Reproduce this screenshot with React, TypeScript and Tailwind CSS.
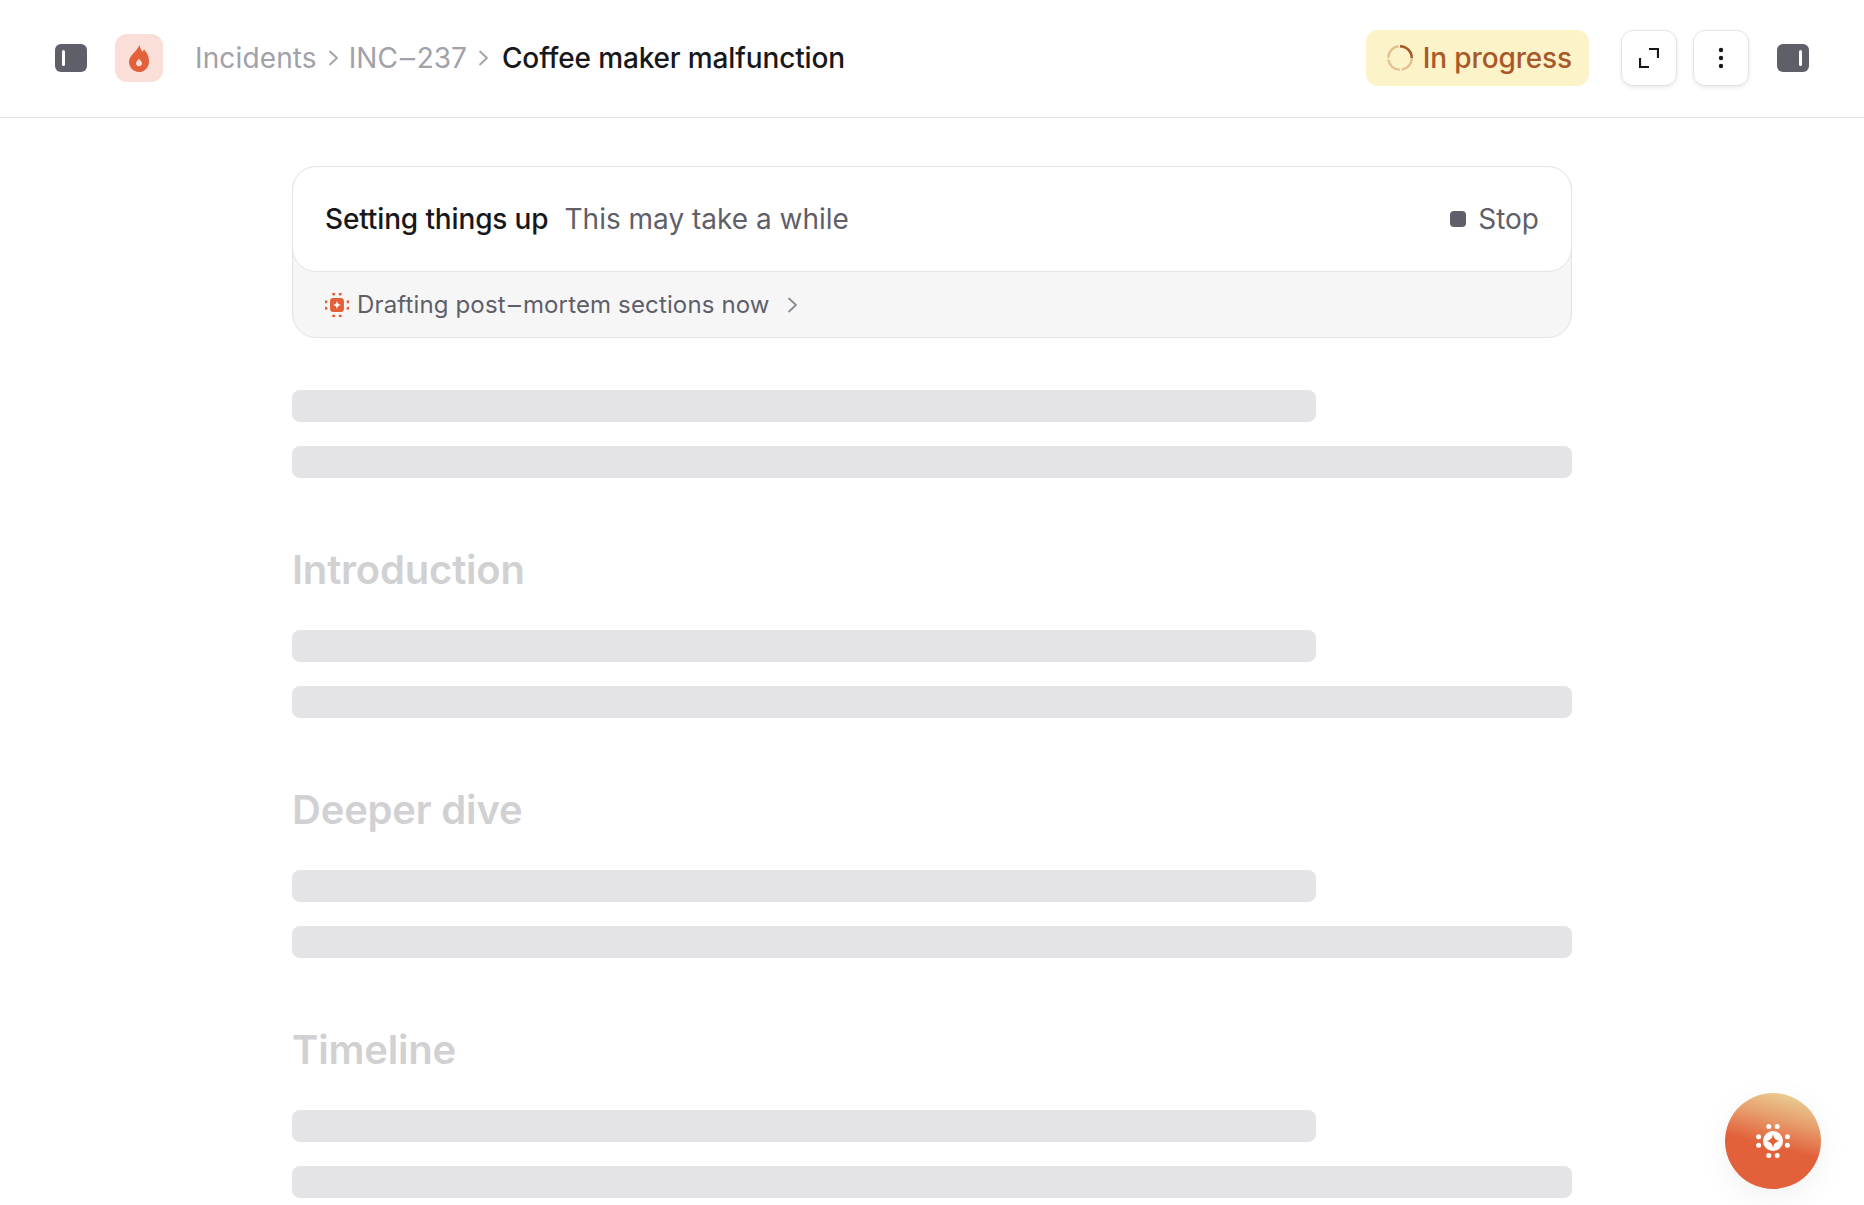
import React from 'react';

const PanelIcon = ({ side }: { side: 'left' | 'right' }) => (
  <svg width="32" height="28" viewBox="0 0 32 28" className="shrink-0">
    <rect width="32" height="28" rx="6" fill="#5f5f69" />
    <rect x={side === 'left' ? 7 : 22} y="6" width="3" height="16" rx="1.5" fill="#fff" />
  </svg>
);

const Flame = () => (
  <svg width="20" height="27" viewBox="0 0 20 27">
    <path
      fillRule="evenodd"
      fill="#e2603a"
      d="M10.500 0c.6 3.400 1.900 5 3 6.800.4-.9.900-1.600 1.600-2.400C17.800 7.400 20 11 20 16.400 20 22.400 15.600 27 10 27S0 22.400 0 16.600C0 10.500 7.500 7.300 10.500 0ZM10 13.800c-.8 1.500-3 2.500-3 4.500 0 1.700 1.400 3 3 3s3-1.300 3-3c0-2-2.200-3-3-4.500Z"
    />
  </svg>
);

const dots = [
  [-3.5, -12], [3.5, -12], [-3.5, 12], [3.5, 12],
  [-12, -3.5], [-12, 3.5], [12, -3.5], [12, 3.5],
];

// small orange spark used in the status strip
const SparkSmall = () => (
  <svg width="24" height="24" viewBox="-13 -13 26 26" className="shrink-0">
    {dots.map(([x, y], i) => (
      <circle key={i} cx={x} cy={y} r="1.7" fill="#e2603a" />
    ))}
    <rect x="-7.500" y="-7.500" width="15" height="15" rx="3.500" fill="#e2603a" />
    <path d="M0-4.500C.5-1.500 1.500-.5 4.500 0 1.500.5.5 1.500 0 4.500-.5 1.500-1.500.5-4.500 0-1.500-.5-.5-1.500 0-4.500Z" fill="#fff" />
  </svg>
);

const SparkLarge = () => (
  <svg width="36" height="36" viewBox="-18 -18 36 36">
    {dots.map(([x, y], i) => (
      <circle key={i} cx={x * 1.2} cy={y * 1.2} r="2.500" fill="#fff" />
    ))}
    <circle r="10" fill="#fff" />
    <path d="M0-7C.8-2.500 2.500-.8 7 0 2.500.8.8 2.500 0 7-.8 2.500-2.500.8-7 0-2.500-.8-.8-2.500 0-7Z" fill="#e2603a" />
  </svg>
);

const Spinner = () => (
  <svg width="26" height="26" viewBox="0 0 26 26" fill="none" className="shrink-0">
    <g transform="rotate(-90 13 13)">
      <circle cx="13" cy="13" r="11.800" stroke="#e4c08f" strokeWidth="2.400" strokeDasharray="16.500 2.030" />
    </g>
    <path d="M13 1.200A11.800 11.800 0 0 1 24.800 13" stroke="#a8592a" strokeWidth="2.400" />
  </svg>
);

const Chevron = ({ color = '#a1a1aa' }: { color?: string }) => (
  <svg width="20" height="20" viewBox="0 0 20 20" fill="none" className="shrink-0">
    <path d="M7 3.500 14 10l-7 6.500" stroke={color} strokeWidth="1.800" strokeLinecap="round" strokeLinejoin="round" />
  </svg>
);

const Hyphen = () => <span className="inline-block scale-x-[1.7] px-[3px]">-</span>;

const Bars = () => (
  <div className="flex flex-col gap-6">
    <div className="h-8 w-[1024px] rounded-lg bg-[#e4e4e7]" />
    <div className="h-8 w-full rounded-lg bg-[#e4e4e7]" />
  </div>
);

const Section = ({ title }: { title: string }) => (
  <section>
    <h2 className="mt-[68px] mb-9 h-12 text-[40px] leading-[48px] font-semibold tracking-[-0.005em] text-[#d1d1d4]">{title}</h2>
    <Bars />
  </section>
);

export default function App() {
  return (
    <div className="relative flex h-screen flex-col overflow-hidden bg-white font-['Inter',sans-serif]">
      <header className="flex h-[118px] shrink-0 items-center justify-between border-b border-[#e4e4e7] px-[55px] pb-px">
        <div className="flex items-center">
          <PanelIcon side="left" />
          <div className="ml-7 flex h-12 w-12 items-center justify-center rounded-xl bg-[#fadfd8]">
            <Flame />
          </div>
          <nav className="ml-8 flex items-center gap-1.5 text-[28px] leading-9 text-[#a1a1aa]">
            <span className="tracking-[0.005em]">Incidents</span>
            <Chevron />
            <span>
              INC<Hyphen />237
            </span>
            <Chevron />
            <span className="ml-[3px] font-[450] tracking-[-0.005em] text-[#18181b]">Coffee maker malfunction</span>
          </nav>
        </div>
        <div className="flex items-center">
          <div className="flex h-14 items-center gap-2.5 rounded-xl bg-[#fdf3c9] pr-[17px] pl-[21px] text-[28px] font-[450] tracking-[-0.005em] text-[#a8592a]">
            <Spinner />
            <span>In progress</span>
          </div>
          <button className="ml-8 flex h-14 w-14 items-center justify-center rounded-xl border border-[#e4e4e7] bg-white shadow-[0_2px_4px_rgba(0,0,0,0.08)]">
            <svg width="20" height="20" viewBox="0 0 20 20" fill="none">
              <path d="M10 1h9v9M1 10v9h9" stroke="#18181b" strokeWidth="2.200" />
            </svg>
          </button>
          <button className="ml-4 flex h-14 w-14 items-center justify-center rounded-xl border border-[#e4e4e7] bg-white shadow-[0_2px_4px_rgba(0,0,0,0.08)]">
            <svg width="6" height="22" viewBox="0 0 6 22" fill="#18181b">
              <circle cx="3" cy="3" r="2.200" />
              <circle cx="3" cy="11" r="2.200" />
              <circle cx="3" cy="19" r="2.200" />
            </svg>
          </button>
          <div className="ml-7">
            <PanelIcon side="right" />
          </div>
        </div>
      </header>

      <main className="mx-auto w-[1280px] pt-12">
        <div className="h-[172px] rounded-3xl border border-[#e4e4e7] bg-[#f6f6f7]">
          <div className="-m-px flex h-[106px] items-center justify-between rounded-3xl border border-[#e4e4e7] bg-white px-8 text-[28px]">
            <div className="flex items-center gap-4">
              <span className="font-[450] tracking-[-0.005em] text-[#18181b]">Setting things up</span>
              <span className="text-[#5f5f69]">This may take a while</span>
            </div>
            <div className="flex items-center gap-3 text-[#5f5f69]">
              <span className="h-4 w-4 rounded bg-[#5f5f69]" />
              <span>Stop</span>
            </div>
          </div>
          <div className="flex h-[66px] items-center gap-2 px-8 pt-0.5 text-2xl tracking-[0.006em] text-[#5f5f69]">
            <SparkSmall />
            <span>
              Drafting post<Hyphen />mortem sections now
            </span>
            <span className="ml-1">
              <Chevron color="#8a8a93" />
            </span>
          </div>
        </div>

        <div className="mt-[52px] mb-px">
          <Bars />
        </div>
        <Section title="Introduction" />
        <Section title="Deeper dive" />
        <Section title="Timeline" />
      </main>

      <div className="absolute right-[43px] bottom-4 flex h-24 w-24 items-center justify-center rounded-full bg-[linear-gradient(195deg,#e9c88f_10%,#e79e6d_30%,#e2603a_55%)] shadow-[0_8px_32px_rgba(0,0,0,0.06)]">
        <SparkLarge />
      </div>
    </div>
  );
}
